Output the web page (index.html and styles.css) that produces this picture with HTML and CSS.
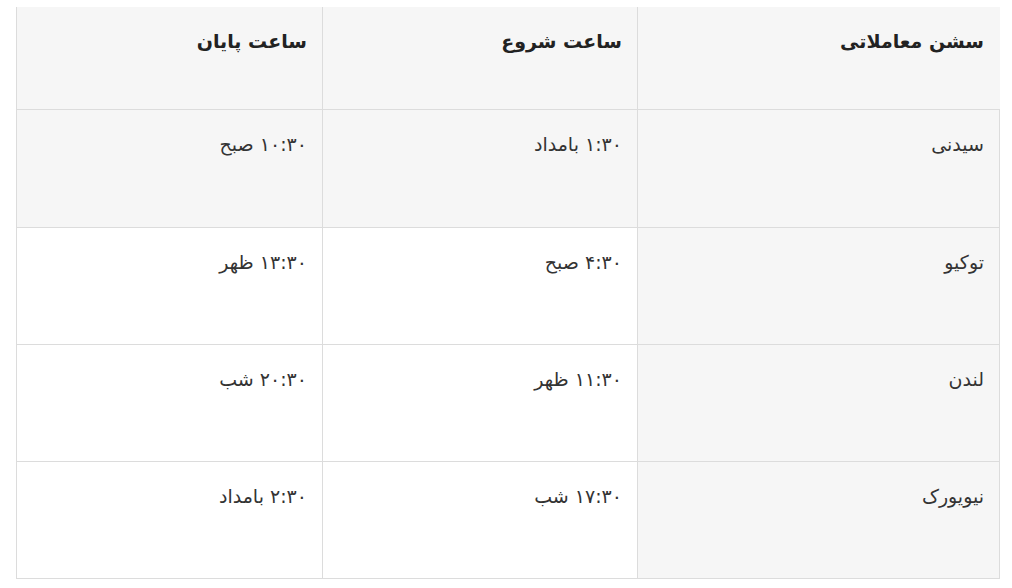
FILE: index.html
```html
<!DOCTYPE html>
<html lang="fa" dir="rtl">
<head>
<meta charset="utf-8">
<link rel="stylesheet" href="styles.css">
</head>
<body>
<div class="wrap">
<table class="sessions">
  <colgroup>
    <col class="c1"><col class="c2"><col class="c3">
  </colgroup>
  <thead>
    <tr><th>سشن معاملاتی</th><th>ساعت شروع</th><th>ساعت پایان</th></tr>
  </thead>
  <tbody>
    <tr class="shade"><td>سیدنی</td><td>۱:۳۰ بامداد</td><td>۱۰:۳۰ صبح</td></tr>
    <tr><td>توکیو</td><td>۴:۳۰ صبح</td><td>۱۳:۳۰ ظهر</td></tr>
    <tr><td>لندن</td><td>۱۱:۳۰ ظهر</td><td>۲۰:۳۰ شب</td></tr>
    <tr><td>نیویورک</td><td>۱۷:۳۰ شب</td><td>۲:۳۰ بامداد</td></tr>
  </tbody>
</table>
</div>
</body>
</html>
```
FILE: styles.css
```css
html, body { margin: 0; padding: 0; background: #fff; }
.wrap { padding: 7px 12px 0 17px; }
.sessions {
  width: 983px;
  border-collapse: collapse;
  table-layout: fixed;
  font-family: "DejaVu Sans", sans-serif;
  color: #222;
}
.c1 { width: 362px; }
.c2 { width: 315px; }
.c3 { width: 306px; }
.sessions th, .sessions td {
  text-align: right;
  vertical-align: top;
  padding: 23px 15px 0 15px;
  border: 1px solid #dcdcdc;
}
.sessions thead th {
  height: 79px;
  background: #f6f6f6;
  font-size: 19px;
  font-weight: bold;
  border-top: none;
  border-right-color: #f6f6f6;
}
.sessions td {
  height: 93px;
  font-size: 19px;
  font-weight: normal;
  color: #333;
}
.sessions tr.shade td { height: 94px; }
.sessions td:first-child { background: #f6f6f6; }
.sessions tr.shade td { background: #f6f6f6; }
```
